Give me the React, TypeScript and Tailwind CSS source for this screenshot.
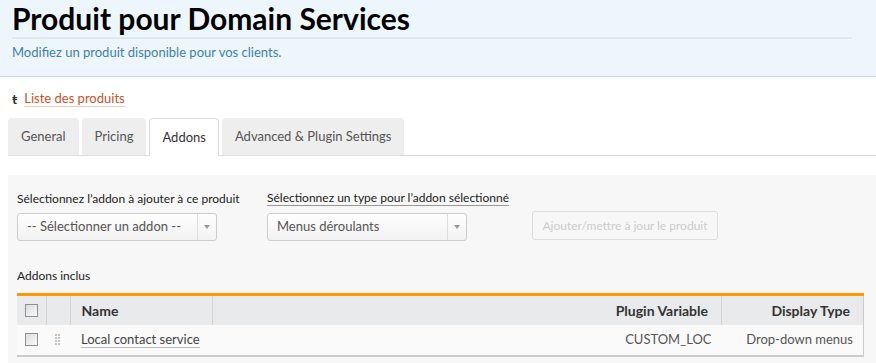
import { FC } from 'react';

const Select: FC<{ label: string }> = ({ label }) => (
  <div className="flex h-[28px] w-[200px] items-stretch rounded-[3px] border border-[#cccccc] bg-gradient-to-b from-white to-[#f2f2f2] text-[13px] text-[#555]">
    <span className="flex flex-1 items-center px-[9px]">{label}</span>
    <span className="flex w-[19px] items-center justify-center border-l border-[#dddddd]">
      <span className="h-0 w-0 border-x-[3px] border-t-[4px] border-x-transparent border-t-[#999]" />
    </span>
  </div>
);

const Checkbox: FC = () => (
  <span className="block h-[13px] w-[13px] border border-[#8f8f8f] bg-gradient-to-br from-[#dcdcdc] to-[#fafafa]" />
);

const Grip: FC = () => (
  <svg width="6" height="11" viewBox="0 0 6 11" className="mx-auto">
    {[0, 3, 6, 9].map((y) =>
      [0, 3].map((x) => (
        <rect key={`${x}-${y}`} x={x} y={y} width="2" height="2" fill="#c4c4c4" />
      ))
    )}
  </svg>
);

export default function App() {
  const tabs = ['General', 'Pricing', 'Addons', 'Advanced & Plugin Settings'];

  return (
    <div className="h-[363px] w-[876px] overflow-hidden bg-white font-['Lato',sans-serif] text-[#333]">
      {/* header */}
      <div className="h-[77px] border-b border-[#b9dcec] bg-[#eef6fd] pl-[12px] pr-[24px] pt-[1px]">
        <h1 className="border-b-2 border-[#dde9f1] pb-[1px] text-[30px] font-bold leading-[35px] text-black">
          Produit pour Domain Services
        </h1>
        <p className="mt-[4px] text-[13px] text-[#3f7fab]">
          Modifiez un produit disponible pour vos clients.
        </p>
      </div>

      <div className="pl-[8px]">
        {/* back link */}
        <div className="flex items-center gap-[7px] pl-[4px] pt-[13px] text-[13px]">
          <span className="text-[14px] font-bold leading-none text-[#333]">ŧ</span>
          <a className="border-b border-[#f4c9b4] leading-[16px] text-[#c7532b]">Liste des produits</a>
        </div>

        {/* tabs */}
        <div className="mt-[11px] flex gap-[3px] border-b border-[#dddddd]">
          {tabs.map((t) => (
            <div
              key={t}
              className={
                t === 'Addons'
                  ? '-mb-px flex h-[38px] items-center rounded-t-[4px] border border-b-0 border-[#dddddd] bg-white px-[12px] text-[13px] text-[#333]'
                  : 'flex h-[37px] items-center rounded-t-[4px] bg-[#eeeeee] px-[13px] text-[13px] text-[#555]'
              }
            >
              {t}
            </div>
          ))}
        </div>

        {/* addons panel */}
        <div className="mt-[19px] h-[200px] bg-[#f7f7f7] pl-[9px] pr-[12px] pt-[15px]">
          <div className="flex items-end">
            <div className="w-[250px]">
              <div className="mb-[7px] text-[12px] leading-[15px] text-[#222]">
                Sélectionnez l’addon à ajouter à ce produit
              </div>
              <Select label="-- Sélectionner un addon --" />
            </div>
            <div className="w-[265px]">
              <div className="mb-[7px] w-fit border-b border-[#999] text-[12px] leading-[15px] text-[#222]">
                Sélectionnez un type pour l’addon sélectionné
              </div>
              <Select label="Menus déroulants" />
            </div>
            <button className="mb-px h-[29px] w-[186px] rounded-[3px] border border-[#dddddd] text-[12px] text-[#cccccc]">
              Ajouter/mettre à jour le produit
            </button>
          </div>

          <div className="mt-[27px] text-[12px] leading-[15px] text-[#222]">Addons inclus</div>

          <table className="mt-[10px] w-full border-collapse border-t-[3px] border-[#ff9900]">
            <thead>
              <tr className="h-[30px] bg-[#e9eaec] text-[14px] text-[#333]">
                <th className="w-[29px] border-r border-[#d4d4d4] p-0">
                  <div className="flex justify-center">
                    <Checkbox />
                  </div>
                </th>
                <th className="w-[24px] border-r border-[#d4d4d4] p-0" />
                <th className="w-[142px] border-r border-[#d4d4d4] pl-[11px] text-left font-bold">Name</th>
                <th className="border-r border-[#d4d4d4] pr-[13px] text-right font-bold">Plugin Variable</th>
                <th className="w-[142px] border-r border-[#cccccc] pr-[13px] text-right font-bold">Display Type</th>
              </tr>
            </thead>
            <tbody>
              <tr className="h-[31px] border-b-2 border-[#cccccc] bg-[#fafafa] text-[13px] text-[#555]">
                <td className="p-0">
                  <div className="flex justify-center">
                    <Checkbox />
                  </div>
                </td>
                <td className="p-0">
                  <Grip />
                </td>
                <td className="pl-[11px]">
                  <a className="border-b border-[#bbbbbb] text-[#444]">Local contact service</a>
                </td>
                <td className="pr-[10px] text-right">CUSTOM_LOC</td>
                <td className="border-r border-[#cccccc] pr-[10px] text-right">Drop-down menus</td>
              </tr>
            </tbody>
          </table>
        </div>
      </div>
    </div>
  );
}
